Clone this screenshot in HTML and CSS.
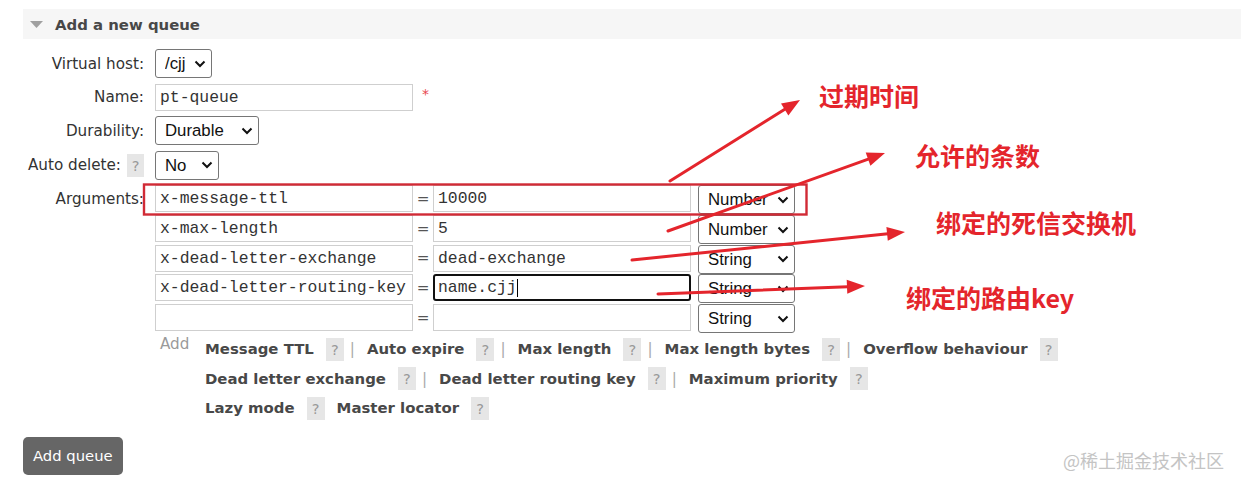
FILE: index.html
```html
<!DOCTYPE html>
<html lang="en">
<head>
<meta charset="utf-8">
<title>Add a new queue</title>
<link rel="stylesheet" href="styles.css">
</head>
<body>
<div class="page">
  <div class="section-head">
    <svg class="tri" width="13" height="7" viewBox="0 0 13 7"><polygon points="0,0 13,0 6.5,7" fill="#a0a0a0"/></svg>
    <h2>Add a new queue</h2>
  </div>

  <form class="form">
    <label class="lbl">Virtual host:</label>
    <div class="field">
      <span class="sel w-vhost"><select><option>/cjj</option></select><svg viewBox="0 0 12 8"><polyline points="1.5,1.5 6,6 10.5,1.5" fill="none" stroke="#111" stroke-width="2"/></svg></span>
    </div>

    <label class="lbl">Name:</label>
    <div class="field">
      <input class="txt w-name" type="text" value="pt-queue"><span class="req">*</span>
    </div>

    <label class="lbl">Durability:</label>
    <div class="field">
      <span class="sel w-dur"><select><option>Durable</option></select><svg viewBox="0 0 12 8"><polyline points="1.5,1.5 6,6 10.5,1.5" fill="none" stroke="#111" stroke-width="2"/></svg></span>
    </div>

    <label class="lbl">Auto delete: <span class="help help-lbl">?</span></label>
    <div class="field">
      <span class="sel w-auto"><select><option>No</option></select><svg viewBox="0 0 12 8"><polyline points="1.5,1.5 6,6 10.5,1.5" fill="none" stroke="#111" stroke-width="2"/></svg></span>
    </div>

    <label class="lbl lbl-top">Arguments:</label>
    <div class="field args-field">
      <div class="args">
        <input class="txt" type="text" value="x-message-ttl"><span class="eq">=</span><input class="txt" type="text" value="10000">
        <span class="sel w-type"><select><option>Number</option></select><svg viewBox="0 0 12 8"><polyline points="1.5,1.5 6,6 10.5,1.5" fill="none" stroke="#111" stroke-width="2"/></svg></span>

        <input class="txt" type="text" value="x-max-length"><span class="eq">=</span><input class="txt" type="text" value="5">
        <span class="sel w-type"><select><option>Number</option></select><svg viewBox="0 0 12 8"><polyline points="1.5,1.5 6,6 10.5,1.5" fill="none" stroke="#111" stroke-width="2"/></svg></span>

        <input class="txt" type="text" value="x-dead-letter-exchange"><span class="eq">=</span><input class="txt" type="text" value="dead-exchange">
        <span class="sel w-type"><select><option>String</option></select><svg viewBox="0 0 12 8"><polyline points="1.5,1.5 6,6 10.5,1.5" fill="none" stroke="#111" stroke-width="2"/></svg></span>

        <input class="txt" type="text" value="x-dead-letter-routing-key"><span class="eq">=</span><span class="focus-wrap"><input class="txt focused" type="text" value="name.cjj"><span class="caret"></span></span>
        <span class="sel w-type"><select><option>String</option></select><svg viewBox="0 0 12 8"><polyline points="1.5,1.5 6,6 10.5,1.5" fill="none" stroke="#111" stroke-width="2"/></svg></span>

        <input class="txt" type="text" value=""><span class="eq">=</span><input class="txt" type="text" value="">
        <span class="sel w-type"><select><option>String</option></select><svg viewBox="0 0 12 8"><polyline points="1.5,1.5 6,6 10.5,1.5" fill="none" stroke="#111" stroke-width="2"/></svg></span>
      </div>

      <div class="add-block">
        <span class="add-lbl">Add</span>
        <div class="links">
          <div class="line">
            <span class="lk">Message TTL</span><span class="help">?</span><span class="sep">|</span>
            <span class="lk">Auto expire</span><span class="help">?</span><span class="sep">|</span>
            <span class="lk">Max length</span><span class="help">?</span><span class="sep">|</span>
            <span class="lk">Max length bytes</span><span class="help">?</span><span class="sep">|</span>
            <span class="lk">Overflow behaviour</span><span class="help">?</span>
          </div>
          <div class="line">
            <span class="lk">Dead letter exchange</span><span class="help">?</span><span class="sep">|</span>
            <span class="lk">Dead letter routing key</span><span class="help">?</span><span class="sep">|</span>
            <span class="lk">Maximum priority</span><span class="help">?</span>
          </div>
          <div class="line">
            <span class="lk">Lazy mode</span><span class="help">?</span>
            <span class="lk">Master locator</span><span class="help">?</span>
          </div>
        </div>
      </div>
    </div>
  </form>

  <button class="btn" type="button">Add queue</button>

  <svg class="marks" width="1241" height="489" viewBox="0 0 1241 489">
    <rect x="144" y="184.5" width="662.5" height="30" fill="none" stroke="#d12a35" stroke-width="2.4"/>
    <g stroke="#e4252c" stroke-width="3" stroke-linecap="round">
      <line x1="670" y1="181" x2="786" y2="108.6"/>
      <line x1="668" y1="231" x2="869" y2="158.8"/>
      <line x1="632" y1="260" x2="888" y2="233.7"/>
      <line x1="658" y1="294" x2="848" y2="286.7"/>
    </g>
    <g fill="#e4252c">
      <polygon points="800,100 788.4,115.5 781.0,103.6"/>
      <polygon points="885,153 870.4,165.7 865.7,152.5"/>
      <polygon points="905,232 887.8,240.8 886.4,226.9"/>
      <polygon points="865,286 847.3,293.7 846.7,279.7"/>
    </g>
  </svg>
  <span class="note n1">过期时间</span>
  <span class="note n2">允许的条数</span>
  <span class="note n3">绑定的死信交换机</span>
  <span class="note n4">绑定的路由key</span>

  <span class="watermark">@稀土掘金技术社区</span>
</div>
</body>
</html>
```

FILE: styles.css
```css
* { box-sizing: border-box; }

body {
  margin: 0;
  background: #fff;
  font-family: "DejaVu Sans", Verdana, sans-serif;
  font-size: 15.2px;
  color: #484848;
}

.page {
  position: relative;
  width: 1241px;
  height: 489px;
  overflow: hidden;
  padding-top: 9px;
}

.section-head {
  margin-left: 23px;
  height: 30px;
  background: #f6f6f6;
  display: flex;
  align-items: center;
  gap: 12px;
  padding: 1px 0 0 7px;
}
.section-head h2 {
  margin: 0;
  font-size: 14.9px;
  font-weight: bold;
  color: #484848;
}

.form {
  display: grid;
  grid-template-columns: 144px auto;
  column-gap: 11px;
  row-gap: 5.6px;
  margin-top: 10px;
}

.lbl {
  text-align: right;
  align-self: center;
  white-space: nowrap;
  color: #333;
  display: flex;
  justify-content: flex-end;
  align-items: center;
}
.lbl-top {
  align-self: start;
  height: 27px;
}

.field {
  display: flex;
  align-items: flex-start;
}

.txt {
  height: 27px;
  border: 1px solid #cfcfcf;
  border-radius: 0;
  padding: 0 4px;
  margin: 0;
  font-family: "Liberation Mono", "Courier New", monospace;
  font-size: 16.4px;
  color: #333;
  background: #fff;
  outline: none;
}
.w-name { width: 258px; }

.req {
  color: #e8474f;
  font-size: 14px;
  margin-left: 9px;
  margin-top: 2px;
}

.sel {
  position: relative;
  display: inline-block;
  height: 29px;
}
.sel select {
  appearance: none;
  -webkit-appearance: none;
  width: 100%;
  height: 29px;
  margin: 0;
  border: 1px solid #767676;
  border-radius: 3px;
  background: #fff;
  padding: 0 0 0 9px;
  font-family: "Liberation Sans", Arial, sans-serif;
  font-size: 16.8px;
  color: #111;
  outline: none;
}
.sel svg {
  position: absolute;
  right: 6px;
  top: 50%;
  width: 12px;
  height: 8px;
  margin-top: -4px;
  pointer-events: none;
}
.w-vhost { width: 57px; }
.w-dur { width: 104px; }
.w-auto { width: 64px; }
.w-type { width: 97px; margin-left: 7px; }

.help {
  display: inline-flex;
  align-items: center;
  justify-content: center;
  width: 18px;
  height: 23px;
  background: #e6e6e6;
  color: #999;
  font-size: 14.6px;
  font-weight: normal;
}
.help-lbl {
  width: 17px;
  margin-left: 6px;
}

.args-field {
  flex-direction: column;
}
.args {
  display: grid;
  grid-template-columns: 258px 20px 258px auto;
  grid-auto-rows: 29.7px;
  align-items: start;
}
.args .txt { width: 258px; }
.eq {
  height: 27px;
  display: flex;
  align-items: center;
  justify-content: center;
  color: #555;
}
.focus-wrap {
  position: relative;
  display: block;
  width: 258px;
}
.txt.focused {
  border: 2px solid #111;
  border-radius: 3px;
  padding-left: 3px;
}
.caret {
  position: absolute;
  left: 84px;
  top: 5px;
  width: 1px;
  height: 18px;
  background: #000;
}

.add-block {
  display: flex;
  margin-top: 1px;
}
.add-lbl {
  width: 50px;
  padding-left: 5px;
  color: #9a9a9a;
  line-height: 19px;
}
.links {
  display: flex;
  flex-direction: column;
}
.line {
  display: flex;
  align-items: center;
  height: 29.3px;
}
.lk {
  font-weight: bold;
  font-size: 14.9px;
  color: #484848;
  white-space: nowrap;
}
.lk + .help { margin-left: 12px; }
.help + .lk { margin-left: 12px; }
.sep {
  color: #aaa;
  margin: 0 12px 0 6px;
}

.btn {
  display: block;
  margin: 14px 0 0 23px;
  height: 38px;
  padding: 0 10px;
  border: none;
  border-radius: 5px;
  background: #666;
  color: #fff;
  font-family: "DejaVu Sans", Verdana, sans-serif;
  font-size: 14.8px;
}

.marks {
  position: absolute;
  left: 0;
  top: 0;
  pointer-events: none;
}

.note {
  position: absolute;
  font-family: "Noto Sans CJK SC", sans-serif;
  font-weight: bold;
  font-size: 25px;
  line-height: 25px;
  color: #e4252c;
  white-space: nowrap;
}
.n1 { left: 819px; top: 83px; }
.n2 { left: 915px; top: 143px; }
.n3 { left: 936px; top: 210px; }
.n4 { left: 906px; top: 285px; }

.watermark {
  position: absolute;
  left: 1063px;
  top: 450px;
  font-family: "Noto Sans CJK SC", sans-serif;
  font-size: 18px;
  line-height: 20px;
  color: #c4c4c4;
  white-space: nowrap;
}
```
